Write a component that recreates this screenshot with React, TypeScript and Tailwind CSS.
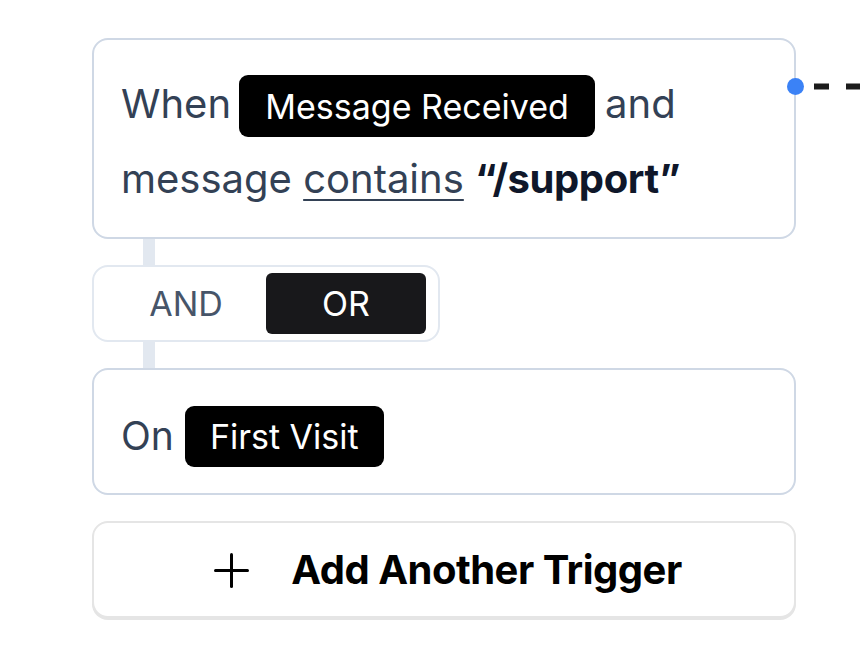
import React from "react";

const font = { fontFamily: "Inter, 'Noto Sans', sans-serif" };

export default function App() {
  return (
    <div className="w-[860px] h-[660px] bg-white overflow-hidden relative" style={font}>
      <div className="pt-[38px] pl-[92px] w-[796px]">
        {/* Card 1 */}
        <div className="relative rounded-[16px] border-2 border-[#cfd8e5] bg-white pl-[27px] pr-[20px] pt-[26px] pb-[21px] text-[40px] leading-[75px] text-[#334155]">
          <div>
            When{" "}
            <span className="inline-flex items-center justify-center h-[62px] px-[26px] ml-[-3px] mr-[-1px] rounded-[9px] bg-black text-white text-[34px] align-middle relative top-[-1px]">
              Message Received
            </span>{" "}
            and
          </div>
          <div>
            message <span className="underline decoration-2 underline-offset-[6px]">contains</span>{" "}
            <span className="font-bold text-[#0f172a] tracking-[-0.4px]">“/support”</span>
          </div>
          {/* connector dot and dashed line */}
          <div className="absolute right-[-10px] top-[38px] w-[17px] h-[17px] rounded-full bg-[#3b82f6]" />
          <svg className="absolute left-[calc(100%+18px)] top-[40px]" width="60" height="14" viewBox="0 0 60 14">
            <line x1="2" y1="6.5" x2="60" y2="6.5" stroke="#1c1c1c" strokeWidth="6" strokeDasharray="15 17" />
          </svg>
        </div>

        {/* connector */}
        <div className="ml-[51px] w-[12px] h-[26px] bg-[#e2e8f0]" />

        {/* AND / OR toggle */}
        <div className="w-[348px] h-[77px] rounded-[16px] border-2 border-[#e2e8f0] flex items-center px-[12px] py-[6px]">
          <div className="w-[160px] h-[61px] flex items-center justify-center text-[34px] text-[#475569]">AND</div>
          <div className="w-[160px] h-[61px] flex items-center justify-center rounded-[6px] bg-[#18181b] text-white text-[34px]">OR</div>
        </div>

        {/* connector */}
        <div className="ml-[51px] w-[12px] h-[26px] bg-[#e2e8f0]" />

        {/* Card 2 */}
        <div className="rounded-[16px] border-2 border-[#cfd8e5] bg-white pl-[27px] h-[127px] flex items-center pt-[9px] text-[39px] text-[#334155]">
          <span>On</span>
          <span className="ml-[11px] inline-flex items-center justify-center h-[61px] px-[25px] rounded-[9px] bg-black text-white text-[34px]">
            First Visit
          </span>
        </div>

        {/* Add button */}
        <div className="mt-[26px] h-[97px] rounded-[16px] border-2 border-[#e5e5e5] shadow-[0_2px_0_#e5e5e5] bg-white flex items-center justify-center gap-[42px] pl-[8px]">
          <svg width="35" height="35" viewBox="0 0 35 35" className="mt-[2px]">
            <line x1="17.5" y1="1.5" x2="17.5" y2="33.5" stroke="#000" strokeWidth="3" strokeLinecap="round" />
            <line x1="1.5" y1="17.5" x2="33.5" y2="17.5" stroke="#000" strokeWidth="3" strokeLinecap="round" />
          </svg>
          <span className="text-[40px] font-bold text-black tracking-[-0.5px]">Add Another Trigger</span>
        </div>
      </div>
    </div>
  );
}
